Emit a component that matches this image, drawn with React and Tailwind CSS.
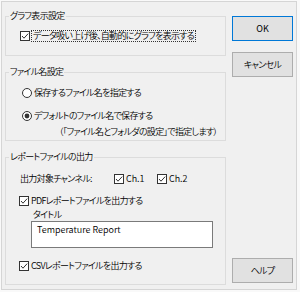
import React from "react";

const Check = ({ checked = true }) => (
  <svg width="10" height="10" viewBox="0 0 10 10" className="shrink-0">
    <rect x="0.5" y="0.5" width="9" height="9" fill="#fff" stroke="#333" />
    {checked && (
      <path d="M2 5 L4 7.2 L8.2 2.6" fill="none" stroke="#333" strokeWidth="1" />
    )}
  </svg>
);

const Radio = ({ checked }) => (
  <svg width="10" height="10" viewBox="0 0 10 10" className="shrink-0">
    <circle cx="5" cy="5" r="4.5" fill="#fff" stroke="#333" />
    {checked && <circle cx="5" cy="5" r="2.4" fill="#333" />}
  </svg>
);

const Group = ({ title, className, children }) => (
  <fieldset className={`border border-[#dcdcdc] ${className}`}>
    <legend className="ml-[3px] px-[1px] h-[12px] leading-[12px]">{title}</legend>
    {children}
  </fieldset>
);

const Button = ({ children, primary, className }) => (
  <button
    className={`w-[61px] h-[25px] bg-[#e1e1e1] border leading-[12px] ${
      primary ? "border-[#0078d7]" : "border-[#adadad]"
    } ${className}`}
  >
    {children}
  </button>
);

export default function App() {
  return (
    <div className="w-[300px] h-[292px] bg-[#f9f9f9] p-[1px] text-[9px] text-black font-[350] tracking-[-0.7px] whitespace-nowrap font-['Noto_Sans_CJK_JP',sans-serif] [font-feature-settings:'palt']">
      <div className="w-[296px] h-[289px] border border-[#d5d5d5] bg-[#f0f0f0] flex">
        {/* left column */}
        <div className="pl-[3px] pt-[8px] w-[224px] flex flex-col">
          <Group title="グラフ表示設定" className="pb-[13px]">
            <div className="mt-[8px] pl-[14px] h-[12px] flex items-center">
              <Check />
              <span className="ml-[1px] px-[1px] h-[12px] leading-[10px] border border-dotted border-[#333]">
                データ吸い上げ後、自動的にグラフを表示する
              </span>
            </div>
          </Group>

          <Group title="ファイル名設定" className="mt-[10px] pb-[2px]">
            <div className="mt-[9px] pl-[16px] h-[12px] flex items-center gap-[2px]">
              <Radio />
              <span>保存するファイル名を指定する</span>
            </div>
            <div className="mt-[11px] pl-[16px] h-[12px] flex items-center gap-[2px]">
              <Radio checked />
              <span>デフォルトのファイル名で保存する</span>
            </div>
            <div className="mt-[4px] pl-[53px] h-[12px] leading-[12px]">
              （「ファイル名とフォルダの設定」で指定します）
            </div>
          </Group>

          <Group title="レポートファイルの出力" className="mt-[10px] pb-[12px]">
            <div className="mt-[10px] pl-[14px] h-[12px] flex items-center">
              <span className="w-[94px]">出力対象チャンネル:</span>
              <Check />
              <span className="ml-[2px] w-[31px] tracking-normal">Ch.1</span>
              <Check />
              <span className="ml-[2px] tracking-normal">Ch.2</span>
            </div>
            <div className="mt-[10px] pl-[13px] h-[12px] flex items-center gap-[2px]">
              <Check />
              <span>PDFレポートファイルを出力する</span>
            </div>
            <div className="mt-[3px] pl-[27px] h-[10px] leading-[10px]">タイトル</div>
            <div className="mt-[1px] ml-[25px] w-[182px] h-[27px] bg-white border border-[#7a7a7a] px-[5px] pt-[2px] leading-[12px] tracking-normal">
              Temperature Report
            </div>
            <div className="mt-[12px] pl-[13px] h-[12px] flex items-center gap-[2px]">
              <Check />
              <span>CSVレポートファイルを出力する</span>
            </div>
          </Group>
        </div>

        {/* right column */}
        <div className="ml-[6px] flex flex-col pt-[14px] pb-[6px]">
          <Button primary className="font-normal tracking-normal">OK</Button>
          <Button className="mt-[11px]">キャンセル</Button>
          <Button className="mt-auto">ヘルプ</Button>
        </div>
      </div>
    </div>
  );
}
